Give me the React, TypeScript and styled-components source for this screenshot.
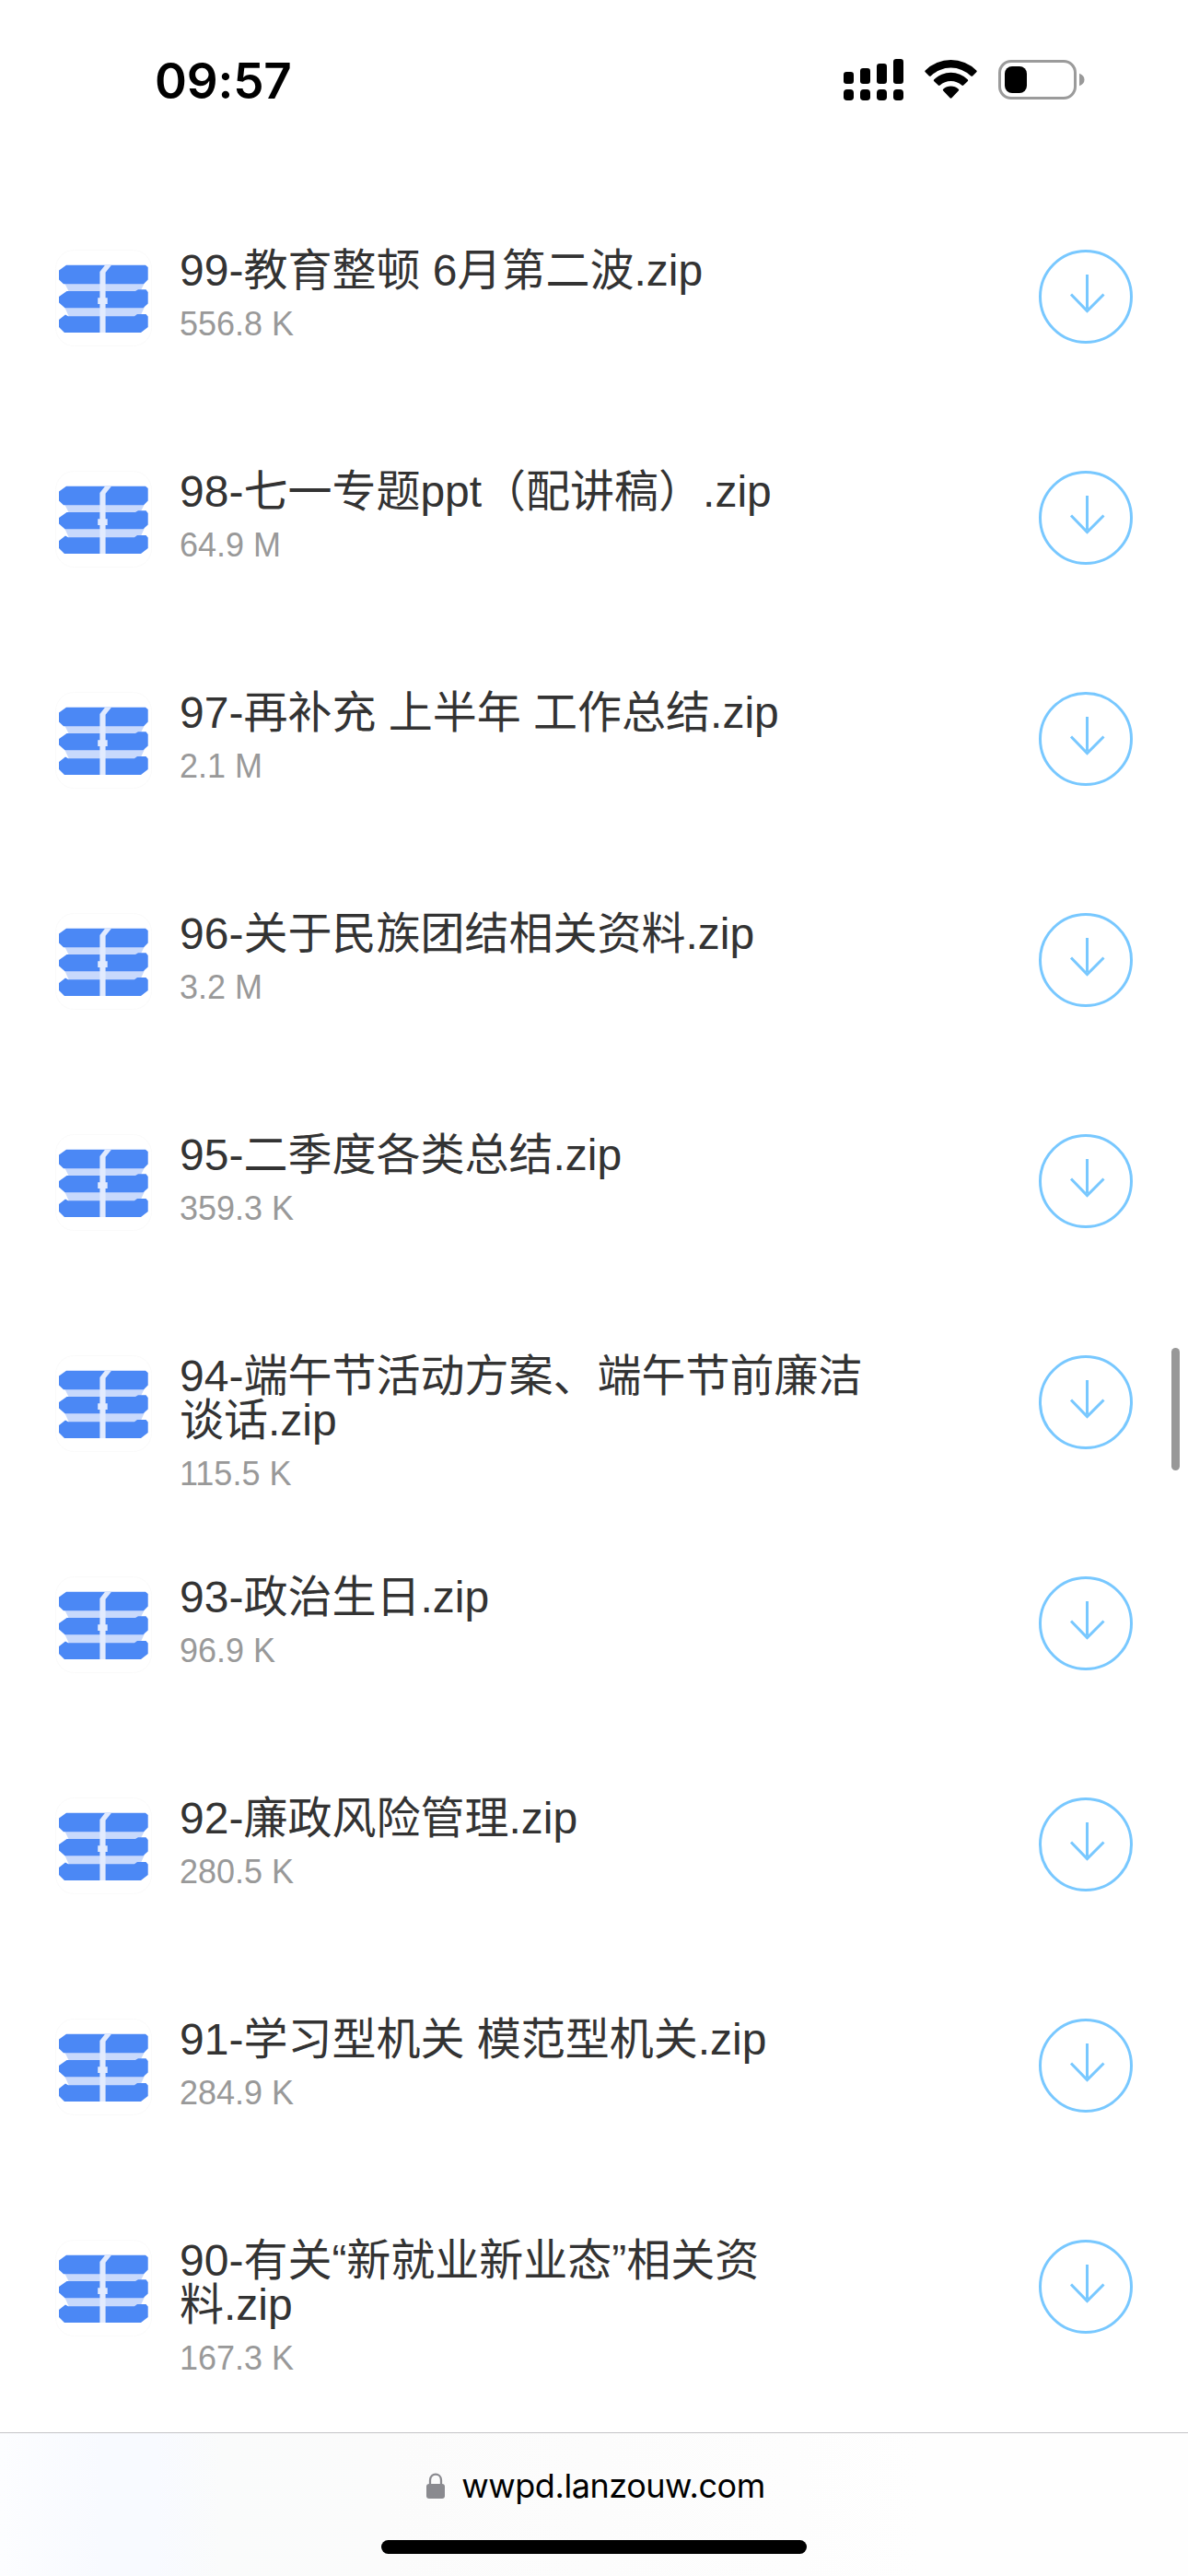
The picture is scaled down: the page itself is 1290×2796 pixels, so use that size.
import React from "react";
import styled, { createGlobalStyle } from "styled-components";

const files = [
  { name: "99-教育整顿 6月第二波.zip", size: "556.8 K" },
  { name: "98-七一专题ppt（配讲稿）.zip", size: "64.9 M" },
  { name: "97-再补充 上半年 工作总结.zip", size: "2.1 M" },
  { name: "96-关于民族团结相关资料.zip", size: "3.2 M" },
  { name: "95-二季度各类总结.zip", size: "359.3 K" },
  { name: "94-端午节活动方案、端午节前廉洁谈话.zip", size: "115.5 K" },
  { name: "93-政治生日.zip", size: "96.9 K" },
  { name: "92-廉政风险管理.zip", size: "280.5 K" },
  { name: "91-学习型机关 模范型机关.zip", size: "284.9 K" },
  { name: "90-有关“新就业新业态”相关资料.zip", size: "167.3 K" },
];

const GlobalStyle = createGlobalStyle`
  * { box-sizing: border-box; }
  body { margin: 0; background: #fff; }
`;

const Screen = styled.div`
  position: relative;
  display: flex;
  flex-direction: column;
  width: 1290px;
  height: 2796px;
  overflow: hidden;
  background: #fff;
  font-family: "Liberation Sans", "Noto Sans CJK SC", sans-serif;
`;

const StatusBar = styled.header`
  display: flex;
  flex: none;
  justify-content: space-between;
  height: 240px;
  padding: 60px 112px 0 168px;
`;

const Clock = styled.time`
  height: 54px;
  padding-top: 1px;
  font: 600 53px/54px Inter, sans-serif;
  letter-spacing: -0.2px;
  color: #000;
`;

const StatusIcons = styled.div`
  display: flex;
  gap: 23px;
  height: 50px;
`;

const FileList = styled.ul`
  flex: 1;
  min-height: 0;
  margin: 0;
  padding: 0;
  list-style: none;
`;

const FileRow = styled.li`
  display: grid;
  grid-template-columns: 105px 744px 102px;
  column-gap: 30px;
  height: 240px;
  padding: 30px 60px 0;
  justify-content: start;
`;

const FileIcon = styled.svg`
  width: 105px;
  height: 105px;
  margin-top: 1px;
`;

const FileInfo = styled.div`
  min-width: 0;
`;

const FileName = styled.div`
  font-size: 48px;
  line-height: 48px;
  color: #333;
  text-spacing-trim: space-all;
`;

const FileSize = styled.div`
  margin-top: 10px;
  font-size: 36px;
  line-height: 48px;
  color: #999;
`;

const DownloadButton = styled.button`
  width: 102px;
  height: 102px;
  margin: 1px 0 0 159px;
  padding: 0;
  border: 3px solid #78c8ff;
  border-radius: 50%;
  background: none;
  svg { display: block; }
`;

const ScrollThumb = styled.div`
  position: absolute;
  top: 1463px;
  right: 9px;
  width: 9px;
  height: 133px;
  border-radius: 5px;
  background: #989898;
`;

const AddressBar = styled.footer`
  position: relative;
  display: flex;
  flex: none;
  flex-direction: column;
  align-items: center;
  height: 156px;
  padding-top: 33px;
  border-top: 1px solid #c4c4c6;
  background: linear-gradient(90deg, #fcfdff 0, #f8faff 110px, #f8faff 170px, #fafbfb 240px, #fbfbfb 420px, #fdfdfd 860px, #fefefe 1000px);
`;

const Address = styled.div`
  display: flex;
  align-items: center;
  gap: 18px;
  height: 48px;
  margin-left: 4px;
  font: 400 36px/48px Inter, sans-serif;
  letter-spacing: -0.45px;
  color: #000;
`;

const HomeIndicator = styled.div`
  width: 462px;
  height: 15px;
  margin-top: 35px;
  border-radius: 8px;
  background: #000;
`;

const Signal = () => (
  <svg width="65" height="50" viewBox="0 0 65 50">
    {[18, 14, 9, 4].map((top, i) => (
      <React.Fragment key={top}>
        <rect x={i * 18} y={top} width="11" height={31 - top} rx="3.2" />
        <rect x={i * 18} y="37" width="11" height="12" rx="3.8" />
      </React.Fragment>
    ))}
  </svg>
);

const Wifi = () => (
  <svg width="57" height="50" viewBox="0 0 57 50">
    <path d="M.7 16.4a39.6 39.6 0 0 1 55.6 0q.9.9 0 1.9l-4.2 4.1q-.9.9-1.8 0a31.4 31.4 0 0 0-43.6 0q-.9.9-1.8 0L.7 18.3q-.9-1 0-1.9Z" />
    <path d="M10.3 26.3a26 26 0 0 1 36.4 0q1 1 0 1.9l-4.5 4.4q-.9.9-1.9 0a17.3 17.3 0 0 0-23.6 0q-1 .9-1.900 0l-4.5-4.4q-1-.9 0-1.9Z" />
    <path d="M20.2 36.7a12.5 12.5 0 0 1 16.6 0q1 .9 0 1.800l-7.3 7.8q-1 .9-2 0l-7.3-7.8q-1-.9 0-1.8Z" />
  </svg>
);

const Battery = () => (
  <svg width="94" height="50" viewBox="0 0 94 50">
    <rect x="1.5" y="6.5" width="82" height="40" rx="12.5" fill="none" stroke="#9b9b9b" strokeWidth="3" />
    <rect x="7" y="12" width="24" height="29" rx="8" />
    <path d="M88 19.8q5.5 2 5.5 6.7T88 33.2Z" fill="#999" />
  </svg>
);

const ZipIcon = () => (
  <FileIcon viewBox="0 0 105 105">
    <rect x=".5" y=".5" width="104" height="104" rx="20" fill="#fff" stroke="#fafafa" />
    <path d="M10 36H97L92 46H15ZM10 62H97L92 73H15Z" fill="#c8d9fc" />
    <path
      d="M12 16.7H98L100.700 19V32.5L96 37.3H9L4 32.5V22.5ZM12.500 45H87L90 43.300H98.500L100.700 46V58.500L95.500 63.300H10.500L4 57.500V51ZM11 70.500L14 72.300H86L89 70H98.500L100.700 72.500V84L93 90H10L4 84V76Z"
      fill="#4b88f5"
    />
    <path d="M54 16.7H61L54.600 24.700V52.300H56.700V59H54.600V90H48.400V59H46.200V52.300H48.400V24Z" fill="#e2ebfe" />
  </FileIcon>
);

const DownArrow = () => (
  <svg width="96" height="96" viewBox="0 0 96 96" fill="none" stroke="#78c8ff" strokeWidth="3">
    <path d="M49.500 24v37M32 45.500l17.500 18L67.500 45.500" />
  </svg>
);

const Lock = () => (
  <svg width="20" height="28" viewBox="0 0 20 28">
    <path d="M4 13V8C4-.5 16-.5 16 8v5" fill="none" stroke="#8a8a8f" strokeWidth="2.3" />
    <rect x="0" y="12" width="20" height="16" rx="3" fill="#8a8a8f" />
  </svg>
);

export default function App() {
  return (
    <Screen>
      <GlobalStyle />
      <StatusBar>
        <Clock>09:57</Clock>
        <StatusIcons>
          <Signal />
          <Wifi />
          <Battery />
        </StatusIcons>
      </StatusBar>
      <FileList>
        {files.map((file) => (
          <FileRow key={file.name}>
            <ZipIcon />
            <FileInfo>
              <FileName>{file.name}</FileName>
              <FileSize>{file.size}</FileSize>
            </FileInfo>
            <DownloadButton aria-label="下载">
              <DownArrow />
            </DownloadButton>
          </FileRow>
        ))}
      </FileList>
      <ScrollThumb />
      <AddressBar>
        <Address>
          <Lock />
          <span>wwpd.lanzouw.com</span>
        </Address>
        <HomeIndicator />
      </AddressBar>
    </Screen>
  );
}
